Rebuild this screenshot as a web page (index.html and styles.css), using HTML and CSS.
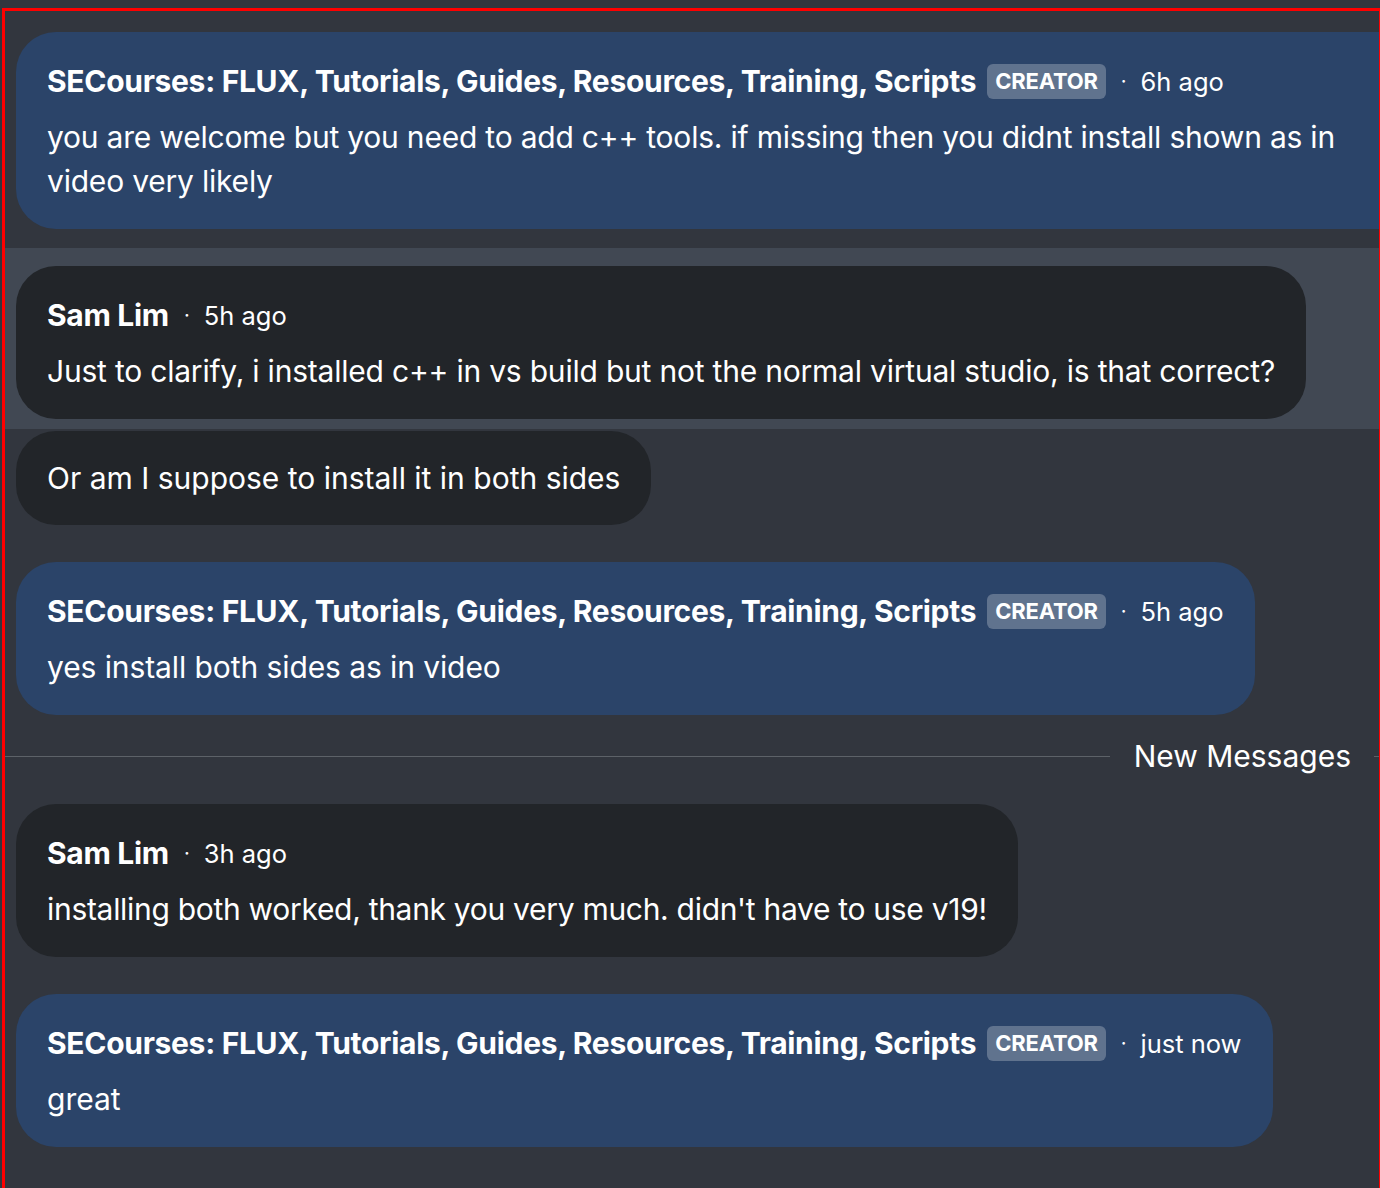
FILE: index.html
```html
<!DOCTYPE html>
<html>
<head>
<meta charset="utf-8">
<link rel="stylesheet" href="styles.css">
</head>
<body>
<div class="frame">
  <div class="row row-first">
    <div class="bubble creator bubble-wide">
      <div class="meta"><span class="name">SECourses: FLUX, Tutorials, Guides, Resources, Training, Scripts</span><span class="badge">CREATOR</span><span class="dot">·</span><span class="time">6h ago</span></div>
      <div class="text text-tight">you are welcome but you need to add c++ tools. if missing then you didnt install shown as in video very likely</div>
    </div>
  </div>
  <div class="row row-hl row-grouped">
    <div class="bubble member">
      <div class="meta"><span class="name">Sam Lim</span><span class="dot">·</span><span class="time">5h ago</span></div>
      <div class="text text-tight">Just to clarify, i installed c++ in vs build but not the normal virtual studio, is that correct?</div>
    </div>
  </div>
  <div class="row row-cont">
    <div class="bubble member bubble-single">
      <div class="text">Or am I suppose to install it in both sides</div>
    </div>
  </div>
  <div class="row">
    <div class="bubble creator">
      <div class="meta"><span class="name">SECourses: FLUX, Tutorials, Guides, Resources, Training, Scripts</span><span class="badge">CREATOR</span><span class="dot">·</span><span class="time">5h ago</span></div>
      <div class="text text-slight">yes install both sides as in video</div>
    </div>
  </div>
  <div class="divider">
    <span class="divider-line"></span>
    <span class="divider-label">New Messages</span>
    <span class="divider-line divider-line-end"></span>
  </div>
  <div class="row">
    <div class="bubble member">
      <div class="meta"><span class="name">Sam Lim</span><span class="dot">·</span><span class="time">3h ago</span></div>
      <div class="text text-tighter">installing both worked, thank you very much. didn't have to use v19!</div>
    </div>
  </div>
  <div class="row">
    <div class="bubble creator">
      <div class="meta"><span class="name">SECourses: FLUX, Tutorials, Guides, Resources, Training, Scripts</span><span class="badge">CREATOR</span><span class="dot">·</span><span class="time">just now</span></div>
      <div class="text">great</div>
    </div>
  </div>
</div>
</body>
</html>
```

FILE: styles.css
```css
html, body {
  margin: 0;
  padding: 0;
  background: #32363e;
  overflow: hidden;
  height: 1188px;
}

body {
  font-family: Inter, "Noto Sans", sans-serif;
  color: #ffffff;
}

.frame {
  margin: 8px 0 0 2px;
  width: 1380px;
  min-height: 1200px;
  border: 3px solid #ff0000;
  box-sizing: border-box;
  overflow: hidden;
}

.row {
  display: flex;
  padding: 18px 0 19px 11px;
}

.row-first {
  padding-top: 21px;
}

.row-hl {
  background: #414853;
}

.row-grouped {
  padding-bottom: 10px;
}

.row-cont {
  padding-top: 2px;
}

.bubble {
  border-radius: 40px;
  padding: 27px 31px 26px 31px;
  box-sizing: border-box;
  max-width: 1400px;
}

.bubble-wide {
  flex: 0 0 auto;
  width: 1410px;
  padding-right: 60px;
}

.bubble-single {
  padding-top: 25px;
  padding-bottom: 25px;
}

.creator {
  background: #2b4469;
}

.member {
  background: #222529;
}

.meta {
  display: flex;
  align-items: center;
  height: 44px;
  white-space: nowrap;
}

.name {
  font-weight: 700;
  font-size: 30px;
  letter-spacing: -0.3px;
}

.badge {
  margin-left: 11px;
  background: rgba(255, 255, 255, 0.25);
  border-radius: 6px;
  font-weight: 700;
  font-size: 22px;
  line-height: 35px;
  padding: 0 8px;
  letter-spacing: -0.2px;
}

.dot {
  font-size: 20px;
  margin: 0 14px 0 15px;
}

.time {
  font-size: 25.5px;
}

.text {
  margin-top: 12px;
  font-size: 30px;
  line-height: 44px;
}

.text-slight {
  letter-spacing: -0.09px;
}

.text-tight {
  letter-spacing: -0.21px;
}

.text-tighter {
  letter-spacing: -0.3px;
}

.bubble-single .text {
  margin-top: 0;
}

.divider {
  display: flex;
  align-items: center;
  padding: 7px 0 15px 0;
  height: 30px;
}

.divider-line {
  flex: 1 1 auto;
  height: 1px;
  background: #5d6268;
}

.divider-line-end {
  flex: 0 0 5px;
}

.divider-label {
  font-size: 30px;
  line-height: 30px;
  padding: 0 23px 0 24px;
}
```
